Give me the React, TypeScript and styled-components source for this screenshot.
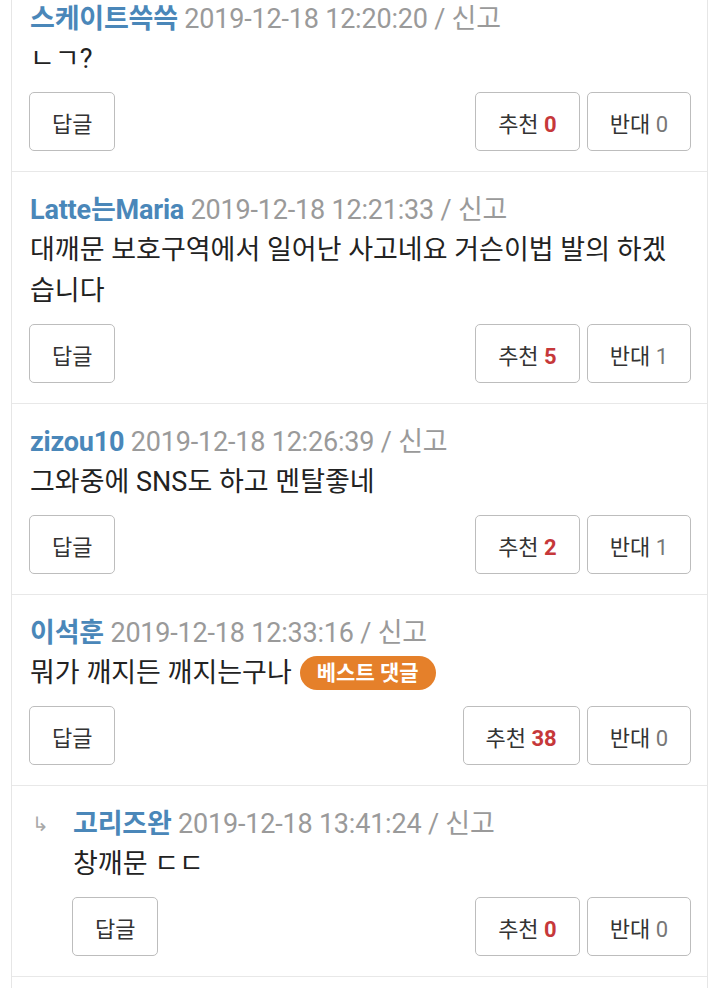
import * as React from "react"
import styled, { createGlobalStyle } from "styled-components"

const GlobalStyle = createGlobalStyle`
    html, body {
        margin: 0;
        padding: 0;
        background: #ffffff;
    }
    body {
        font-family: Roboto, "Noto Sans CJK KR", sans-serif;
        color: #222222;
        overflow: hidden;
    }
`

interface Comment {
    readonly author: string
    readonly date: string
    readonly body: string
    readonly up: number
    readonly down: number
    readonly best?: boolean
    readonly reply?: boolean
}

const COMMENTS: Comment[] = [
    { author: "스케이트쓱쓱", date: "2019-12-18 12:20:20", body: "ㄴㄱ?", up: 0, down: 0 },
    {
        author: "Latte는Maria",
        date: "2019-12-18 12:21:33",
        body: "대깨문 보호구역에서 일어난 사고네요 거슨이법 발의 하겠습니다",
        up: 5,
        down: 1,
    },
    { author: "zizou10", date: "2019-12-18 12:26:39", body: "그와중에 SNS도 하고 멘탈좋네", up: 2, down: 1 },
    { author: "이석훈", date: "2019-12-18 12:33:16", body: "뭐가 깨지든 깨지는구나", up: 38, down: 0, best: true },
    { author: "고리즈완", date: "2019-12-18 13:41:24", body: "창깨문 ㄷㄷ", up: 0, down: 0, reply: true },
]

const List = styled.div`
    margin: -20px 12px 0 11px;
    border-left: 1px solid #e6e6e6;
    border-right: 1px solid #e6e6e6;
    min-height: 1010px;
`

const Row = styled.div<{ $reply?: boolean }>`
    display: grid;
    grid-template-columns: ${(p) => (p.$reply ? "43px 1fr" : "1fr")};
    border-top: 1px solid #e8e8e8;
    padding: 18px 16px 20px 17px;

    &:last-child {
        border-bottom: 1px solid #e8e8e8;
    }
`

const ReplyMark = styled.div`
    color: #a8a8a8;
    font-size: 20px;
    line-height: 40px;
    padding-left: 3px;
`

const Body = styled.div`
    display: flex;
    flex-direction: column;
    min-width: 0;
`

const Meta = styled.div`
    font-size: 27px;
    line-height: 40px;
    white-space: nowrap;
    padding-left: 1px;
    letter-spacing: -0.2px;
`

const Author = styled.span`
    color: #4a87b9;
    font-weight: 700;
`

const Muted = styled.span`
    color: #9a9a9a;
`

const Text = styled.div`
    font-size: 27px;
    line-height: 41px;
    color: #222222;
    padding-left: 1px;
`

const Badge = styled.span`
    display: inline-block;
    margin-left: 8px;
    padding: 0 17px;
    height: 34px;
    line-height: 34px;
    border-radius: 17px;
    background: #e5802a;
    color: #ffffff;
    font-size: 21px;
    font-weight: 700;
    vertical-align: 2px;
`

const Actions = styled.div`
    display: flex;
    align-items: center;
    margin-top: 12px;
    gap: 7px;
`

const Button = styled.button<{ $push?: boolean }>`
    height: 59px;
    padding: 0 22px;
    margin-left: ${(p) => (p.$push ? "auto" : "0")};
    border: 1px solid #bdbdbd;
    border-radius: 5px;
    background: #ffffff;
    color: #333333;
    font-family: Roboto, "Noto Sans CJK KR", sans-serif;
    font-size: 22px;
    cursor: pointer;
`

const Count = styled.span<{ $up?: boolean }>`
    color: ${(p) => (p.$up ? "#c6383a" : "#777777")};
    font-weight: ${(p) => (p.$up ? 700 : 400)};
`

function CommentRow({ c }: { c: Comment }): JSX.Element {
    return (
        <Row $reply={c.reply}>
            {c.reply && <ReplyMark>↳</ReplyMark>}
            <Body>
                <Meta>
                    <Author>{c.author}</Author> <Muted>{c.date} / 신고</Muted>
                </Meta>
                <Text>
                    {c.body}
                    {c.best && <Badge>베스트 댓글</Badge>}
                </Text>
                <Actions>
                    <Button>답글</Button>
                    <Button $push>
                        추천 <Count $up>{c.up}</Count>
                    </Button>
                    <Button>
                        반대 <Count>{c.down}</Count>
                    </Button>
                </Actions>
            </Body>
        </Row>
    )
}

export default function App(): JSX.Element {
    return (
        <>
            <GlobalStyle />
            <List>
                {COMMENTS.map((c) => (
                    <CommentRow key={c.author} c={c} />
                ))}
            </List>
        </>
    )
}
